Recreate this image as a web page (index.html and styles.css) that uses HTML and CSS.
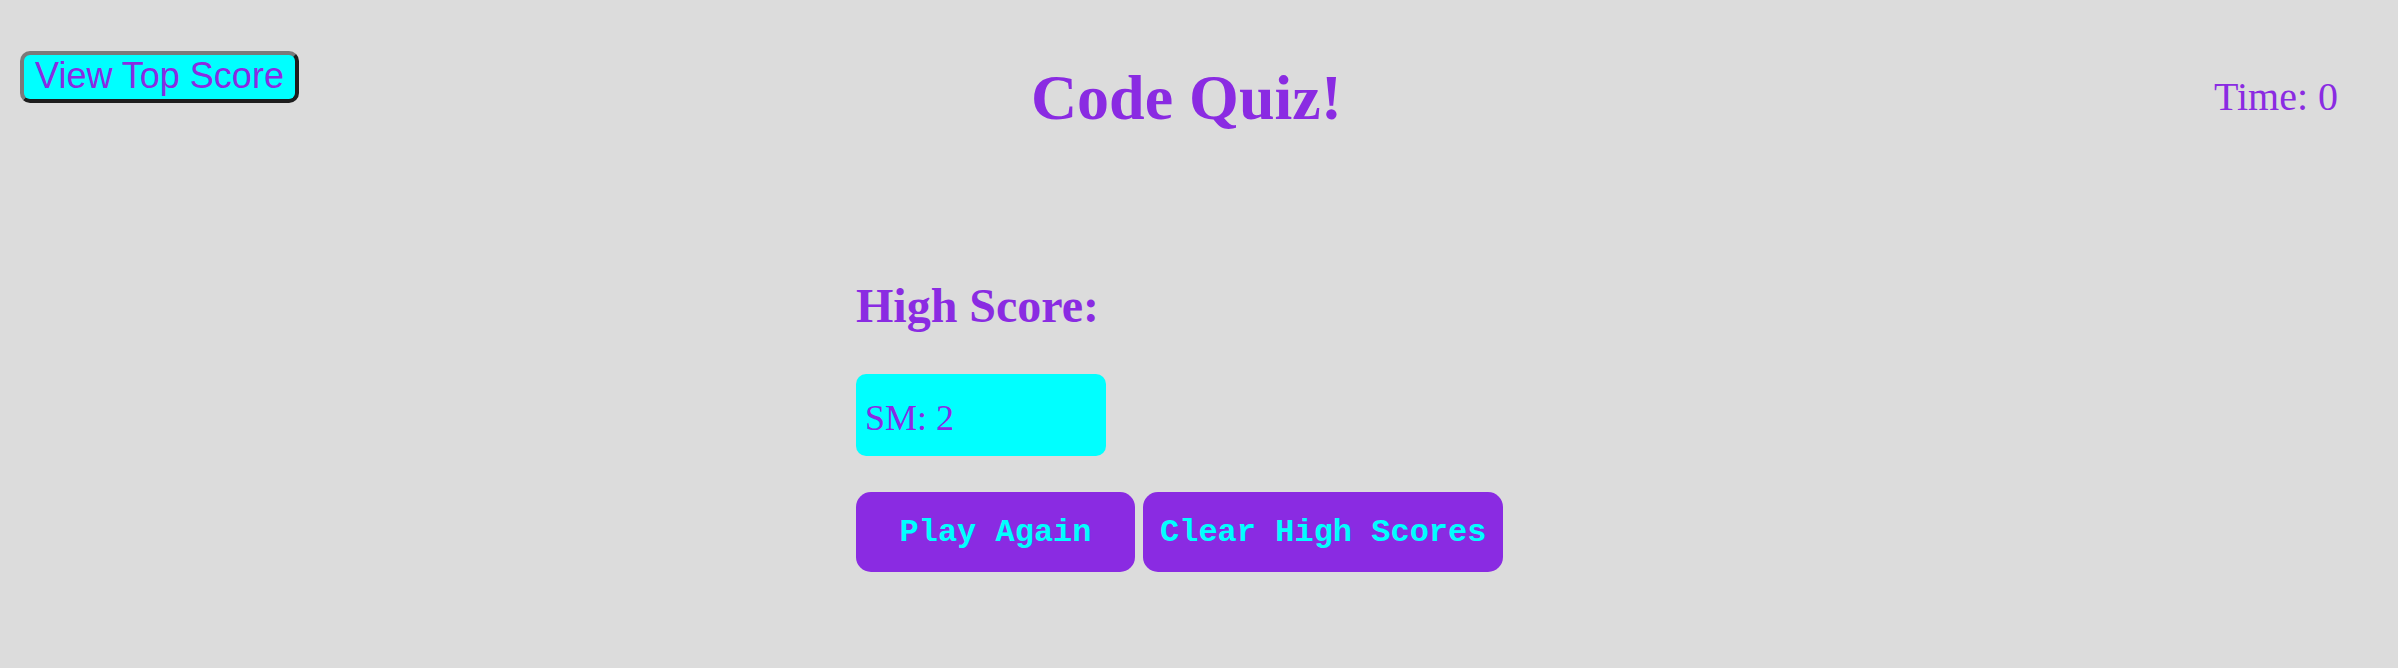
FILE: index.html
```html
<!DOCTYPE html>
<html lang="en">
<head>
<meta charset="utf-8">
<title>Code Quiz!</title>
<link rel="stylesheet" href="styles.css">
</head>
<body>
<header class="top-bar">
  <button class="top-score-btn">View Top Score</button>
  <h1 class="title">Code Quiz!</h1>
  <div class="timer">Time: 0</div>
</header>
<main class="panel">
  <h2 class="panel-heading">High Score:</h2>
  <div class="score-entry">SM: 2</div>
  <div class="actions">
    <button class="action-btn play-btn">Play Again</button>
    <button class="action-btn">Clear High Scores</button>
  </div>
</main>
</body>
</html>
```
FILE: styles.css
```css
html, body {
  margin: 0;
  padding: 0;
}

body {
  background: #dcdcdc;
  color: #8a2be2;
  font-family: "Liberation Serif", "Times New Roman", serif;
  min-height: 668px;
}

.top-bar {
  display: flex;
  align-items: flex-start;
  justify-content: space-between;
  padding: 51px 60px 0 20px;
}

.top-score-btn {
  margin: 0;
  height: 52px;
  padding: 1px 8px 3px;
  border-width: 4px;
  border-style: solid;
  border-color: #7a7a7a #1e1e1e #1e1e1e #7a7a7a;
  border-radius: 10px;
  background: #00ffff;
  color: #8a2be2;
  font-family: "Liberation Sans", Arial, sans-serif;
  font-size: 36px;
  line-height: 40px;
  box-sizing: border-box;
  width: 279px;
}

.title {
  margin: 15px 140px 0 0;
  font-size: 64px;
  line-height: 64px;
  font-weight: bold;
}

.timer {
  margin-top: 26px;
  font-size: 40px;
  line-height: 40px;
}

.panel {
  width: 686px;
  margin: 0 auto;
  padding-top: 152px;
}

.panel-heading {
  margin: 0 0 44px;
  font-size: 48px;
  line-height: 48px;
  font-weight: bold;
}

.score-entry {
  box-sizing: border-box;
  width: 250px;
  height: 82px;
  padding: 26px 9px 20px;
  background: #00ffff;
  border-radius: 10px;
  font-size: 36px;
  line-height: 36px;
}

.actions {
  display: flex;
  gap: 8px;
  margin-top: 36px;
}

.action-btn {
  margin: 0;
  height: 80px;
  padding: 0 17px;
  border: none;
  border-radius: 15px;
  background: #8a2be2;
  color: #00ffff;
  font-family: "Liberation Mono", "Courier New", monospace;
  font-weight: bold;
  font-size: 32px;
}

.play-btn {
  width: 279px;
}
```
